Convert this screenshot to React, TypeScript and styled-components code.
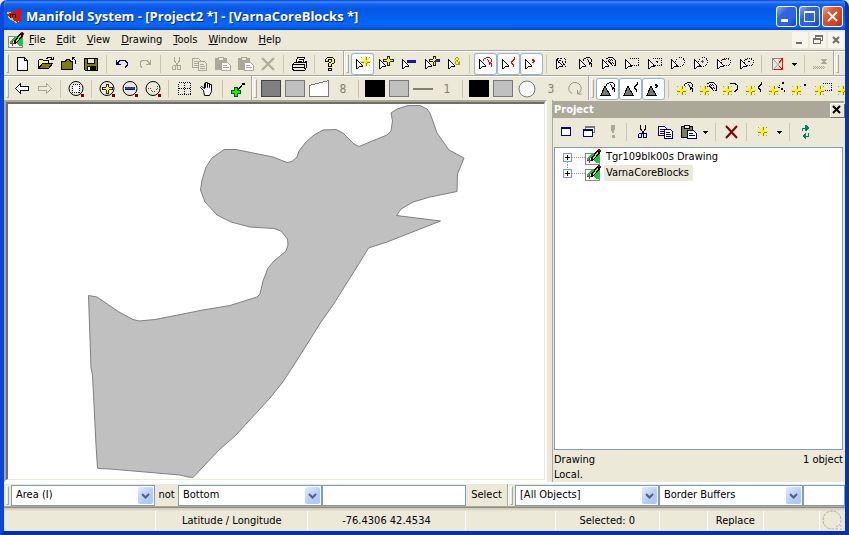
import React from "react";
import styled, { createGlobalStyle } from "styled-components";

const face = "#ece9d8";
const shade = "#aca899";
const edge = "#7f9db9";

const GlobalStyle = createGlobalStyle`
  * { box-sizing: border-box; }
  body {
    margin: 0;
    background: ${face};
    color: #000;
    font: 11px/14px "DejaVu Sans Condensed", "DejaVu Sans", sans-serif;
  }
  button, input, select { font: inherit; color: inherit; margin: 0; padding: 0; border: 0; background: none; }
  svg { display: block; flex: none; }
`;

const Window = styled.div`
  display: flex;
  flex-direction: column;
  height: 100vh;
  border: 4px solid #0a46d8;
  border-top: 0;
  border-radius: 7px 7px 0 0;
  border-right-color: #0335b8;
  border-bottom-color: #0130b4;
  background: ${face};
  overflow: hidden;
`;

const TitleBar = styled.header`
  display: flex;
  align-items: center;
  flex: none;
  height: 30px;
  margin: 0 -4px;
  padding: 2px 6px 0 4px;
  gap: 2px;
  color: #fff;
  background: linear-gradient(#0a3fc9 0, #3b8cff 2px, #1464ee 4px, #0556e6 9px, #0560f2 18px, #0468fd 25px, #0359e8 28px, #0240c4 30px);
`;

const Title = styled.h1`
  flex: 1;
  margin: 0 0 0 1px;
  font: bold 13px/18px "Open Sans", "Noto Sans", sans-serif;
  text-shadow: 1px 1px 0 #0a2a80;
  white-space: nowrap;
  overflow: hidden;
`;

const CaptionButton = styled.button<{ $close?: boolean }>`
  width: 21px;
  height: 21px;
  border: 1px solid #fff;
  border-radius: 3px;
  background: ${(p) =>
    p.$close
      ? "linear-gradient(135deg, #f0a38c, #e2532c 35%, #d5431d 70%, #b4330f)"
      : "linear-gradient(135deg, #86a8f4, #2e63e4 35%, #2a63ec 70%, #1243b8)"};
`;

const MenuBar = styled.nav`
  display: flex;
  align-items: center;
  flex: none;
  height: 20px;
  padding: 0 1px 0 4px;
`;

const MenuItem = styled.button`
  margin-left: 5px;
  padding-right: 6px;
  line-height: 18px;
  & u { text-underline-offset: 1px; }
`;

const Spacer = styled.span`
  flex: 1;
`;

const ChildButton = styled.button`
  width: 16px;
  height: 16px;
  margin-left: 2px;
  background: #f7f5ee;
`;

const ToolRow = styled.div`
  display: flex;
  flex: none;
  height: 25px;
  border-top: 1px solid ${shade};
  box-shadow: inset 0 1px 0 #fff;
  overflow: hidden;
`;

const Band = styled.div<{ $last?: boolean }>`
  display: flex;
  align-items: center;
  flex: none;
  padding: 1px 1px 0 2px;
  ${(p) => (p.$last ? "" : `border-right: 1px solid ${shade}; box-shadow: 1px 0 0 #fff;`)}
`;

const Grip = styled.span`
  flex: none;
  width: 3px;
  height: 19px;
  margin-right: 2px;
  border: 1px solid ${shade};
  border-left-color: #fff;
  border-top-color: #fff;
  background: ${face};
`;

const ToolButton = styled.button<{ $on?: boolean; $wide?: boolean }>`
  flex: none;
  width: ${(p) => (p.$wide ? 24 : 23)}px;
  height: 22px;
  border-radius: 3px;
  background: ${(p) => (p.$on ? "#fff" : "none")};
  box-shadow: ${(p) => (p.$on ? "inset 0 0 0 1px #98b5cf" : "none")};
`;

const Sep = styled.span`
  flex: none;
  width: 1px;
  height: 18px;
  margin: 0 4px 0 3px;
  background: #cac6b4;
`;

const ArrowButton = styled.button`
  width: 12px;
  height: 22px;
`;

const Measure = styled.button`
  width: 24px;
  height: 22px;
  color: #808073;
  font-size: 12px;
`;

const Workspace = styled.main`
  display: flex;
  flex: 1;
  min-height: 0;
`;

const MapFrame = styled.section`
  flex: 1;
  min-width: 0;
  border: 2px solid ${shade};
  border-right-color: #fff;
  border-bottom-color: #fff;
  margin-right: 5px;
  display: flex;
`;

const MapView = styled.div`
  flex: 1;
  min-width: 0;
  background: #fff;
  border: 2px solid #716f64;
  border-right: 1px solid ${face};
  border-bottom: 1px solid ${face};
  & svg { width: 100%; height: 100%; }
`;

const Panel = styled.aside`
  display: flex;
  flex-direction: column;
  flex: none;
  width: 293px;
  padding-right: 2px;
  border-left: 1px solid ${shade};
`;

const PanelHead = styled.header`
  display: flex;
  align-items: center;
  height: 17px;
  margin: 1px -1px 0 0;
  padding: 0 0 0 1px;
  background: ${shade};
`;

const PanelTitle = styled.h2`
  flex: 1;
  margin: 0;
  color: #fff;
  font-size: 11px;
  line-height: 16px;
`;

const PanelClose = styled.button`
  width: 14px;
  height: 14px;
  background: ${face};
  box-shadow: inset 1px 1px 0 #fff, 1px 1px 0 #716f64;
`;

const PanelTools = styled.div`
  display: flex;
  align-items: center;
  height: 28px;
  margin-left: 1px;
`;

const Tree = styled.ul`
  flex: 1;
  margin: 1px 0 0 1px;
  padding: 1px 0 0 4px;
  list-style: none;
  border: 1px solid ${edge};
  background: #fff;
`;

const TreeItem = styled.li`
  display: flex;
  align-items: center;
  height: 16px;
`;

const TreeLabel = styled.span<{ $selected?: boolean }>`
  margin-left: 3px;
  padding: 0 4px 0 2px;
  line-height: 16px;
  background: ${(p) => (p.$selected ? face : "transparent")};
`;

const PanelInfo = styled.div`
  display: flex;
  justify-content: space-between;
  height: 15px;
  padding-left: 1px;
  line-height: 15px;
`;

const PanelFoot = styled.footer`
  padding: 2px 0 0;
`;

const QueryRow = styled.div`
  display: flex;
  flex: none;
  height: 25px;
  border-top: 2px solid #fff;
  border-bottom: 1px solid ${shade};
`;

const QueryBand = styled.div<{ $grow?: boolean }>`
  display: flex;
  align-items: center;
  flex: ${(p) => (p.$grow ? "1 1 337px" : "0 1 504px")};
  min-width: 0;
  padding-left: 2px;
  ${(p) => (p.$grow ? "" : `border-right: 1px solid ${shade}; box-shadow: 1px 0 0 #fff;`)}
`;

const Combo = styled.span`
  display: flex;
  flex: 0 1 144px;
  height: 21px;
  min-width: 0;
  padding: 1px;
  border: 1px solid ${edge};
  background: #fff;
`;

const Select = styled.select`
  appearance: none;
  flex: 1;
  min-width: 0;
  padding-left: 3px;
  outline: 0;
`;

const Drop = styled.button`
  width: 15px;
  height: 17px;
  border-radius: 2px;
  background: linear-gradient(135deg, #e1eafe, #b7cbfb 60%, #aec4f5);
`;

const TextBox = styled.input<{ $grow?: boolean }>`
  flex: ${(p) => (p.$grow ? "1 1 42px" : "0 1 144px")};
  min-width: 0;
  height: 21px;
  padding: 0 3px;
  border: 1px solid ${edge};
  background: #fff;
`;

const NotLabel = styled.button`
  width: 23px;
  line-height: 18px;
`;

const SelectButton = styled.button`
  width: 41px;
  line-height: 18px;
`;

const StatusBar = styled.footer`
  display: flex;
  flex: none;
  height: 24px;
  border-top: 1px solid #8f8c80;
  box-shadow: inset 0 2px 2px #cfccbd;
`;

const Cell = styled.span<{ $w: number }>`
  flex: ${(p) => p.$w} 1 ${(p) => p.$w}px;
  min-width: 0;
  margin: 3px 0 1px;
  border-right: 1px solid #fff;
  line-height: 20px;
  text-align: center;
  white-space: nowrap;
`;

const Glyph = ({ children, w = 23 }: { children?: React.ReactNode; w?: number }) => (
  <svg width={w} height="22" viewBox={`0 0 ${w} 22`} fill="none" stroke="#000" shapeRendering="crispEdges">
    {children}
  </svg>
);

type ToolProps = { label: string; on?: boolean; wide?: boolean; children: React.ReactNode };
const Tool = ({ label, on, wide, children }: ToolProps) => (
  <ToolButton aria-label={label} title={label} $on={on} $wide={wide}>
    <Glyph w={wide ? 24 : 23}>{children}</Glyph>
  </ToolButton>
);

const Down = ({ label }: { label: string }) => (
  <ArrowButton aria-label={label}>
    <svg width="12" height="22" shapeRendering="crispEdges">
      <path d="M3 10h5v1h-1v1h-1v1h-1v-1h-1v-1h-1z" />
    </svg>
  </ArrowButton>
);

const Pointer = () => (
  <>
    <path d="M6 7h1v1h1v1h1v1h1v1h1v1h1v2h-3v1h-1v1h-2z" fill="#fff" stroke="none" />
    <path d="M5 6h1v10h-1zM6 7h1v1h-1zM7 8h1v1h-1zM8 9h1v1h-1zM9 10h1v1h-1zM10 11h1v1h-1zM11 12h1v1h-1zM8 13h4v1h-4zM7 14h1v1h-1zM6 15h1v1h-1z" fill="#000" stroke="none" />
  </>
);

const Star = ({ x, y }: { x: number; y: number }) => (
  <g transform={`translate(${x} ${y})`} stroke="none">
    <path d="M1-4h1v3h-1zM-4 1h3v1h-3zM2 1h3v1h-3zM1 2h1v3h-1z" fill="#8c8820" />
    <path d="M-4-4h1v1h-1zM4-4h1v1h-1zM-4 4h1v1h-1zM4 4h1v1h-1z" fill="#a8a440" />
    <path d="M0-5h1v11h-1zM-5 0h11v1h-11zM-1-1h3v3h-3z" fill="#fff000" />
    <path d="M-3-3h1v1h-1zM-2-2h1v1h-1zM3-3h1v1h-1zM2-2h1v1h-1zM-3 3h1v1h-1zM-2 2h1v1h-1zM2 2h1v1h-1zM3 3h1v1h-1z" fill="#fff000" />
  </g>
);

type ShapeProps = { kind: string; c?: string; dx?: number };
const Shape = ({ kind, c = "#000", dx = 0 }: ShapeProps) => {
  const shapes: Record<string, React.ReactNode> = {
    area: <path d="M9.5 7.500v-1l1-1h1l1-1h3l2 2v2l-1 1 1 2v2M12.500 6.500h1l1 1v1l1 1v2" />,
    hatch: (
      <>
        <path d="M8.500 6.500l1-1h1l1-1h4l2 2 1 1v4l-1 2" />
        <path d="M9 8.500h2l2 1 3 3M12 6l5 5M14 6l3 3M11 7l5 6" strokeDasharray="1 1" />
      </>
    ),
    line: <path d="M17.500 4v2l-1 1-2 2v1l1 1 1 1v2" />,
    point: <path d="M12 7h1v1h1v-1h-1v-1h-1zM14 8h-1v1h-1" />,
    box: <path d="M9.500 5.500h9v7h-9" strokeDasharray="1 1" strokeWidth="1" />,
    centerBox: (
      <>
        <path d="M9.500 5.500h9v7h-9" strokeDasharray="1 1" />
        <path d="M13 8.500h2M14.500 8v2" />
      </>
    ),
    circle: <circle cx="14" cy="9" r="4.500" strokeDasharray="1 1" />,
    centerCircle: (
      <>
        <circle cx="14" cy="9" r="4.500" strokeDasharray="1 1" />
        <path d="M12 8.500h3M13.500 7v3" stroke="#555" />
      </>
    ),
    ellipse: (
      <>
        <ellipse cx="14" cy="9" rx="5" ry="3.500" strokeDasharray="1 1" />
        <path d="M12 6.500h2M16 6.500h1" stroke="#f00" />
      </>
    ),
    centerEllipse: (
      <>
        <ellipse cx="14" cy="9" rx="5" ry="3.500" strokeDasharray="1 1" />
        <path d="M13 8.500h2" />
      </>
    ),
    arc: <path d="M8.500 6.500l1-1h4l2 1 1 1v3l-1 2-2 1" />,
    points: <path d="M15 4h2v2h-2zM12 7h1v1h-1zM11 9h2v1h-2zM14 10h2v2h-2zM17 12h1v2h-1z" fill={c} stroke="none" />,
    dot: <path d="M14 6h2v2h-2z" fill={c} stroke="none" />,
    touch: <path d="M5.500 9v-2l1-1 1-1h2l2 1M7.500 10v-2l1-1h1M13.500 5.500l1 1v3l-1 1M11.500 8v2l2 2 1 1 1 2" strokeDasharray="2 1" />,
  };
  return <g stroke={c} transform={`translate(${dx} 0)`}>{shapes[kind]}</g>;
};

const Plus = ({ x = 14, y = 8 }: { x?: number; y?: number }) => (
  <g transform={`translate(${x} ${y})`} stroke="none">
    <path d="M-1-5h3v3h4v3h-4v4h-3v-4h-4v-3h4z" fill="#222" />
    <path d="M0-4h1v8h-1zM-4-1h9v1h-9zM-1-2h3v3h-3z" fill="#ff0" />
  </g>
);

const Clip = ({ c = "#000", body = "#807c50" }: { c?: string; body?: string }) => (
  <>
    <path d="M4.500 5.500h11v11h-11z" fill={body} stroke={c} />
    <path d="M7.500 4.500h5v3h-5z" fill={face} stroke={c} />
    <path d="M10.500 9.500h6l3 3v5h-9zM12 12.500h4M12 14.500h6" fill="#fff" stroke={c === "#000" ? "#000080" : c} />
  </>
);

const Copy = ({ c, fill }: { c: string; fill: string }) => (
  <>
    <path d="M4.500 5.500h6l2 2v7h-8zM6 8.500h4M6 10.500h5M6 12.500h5" stroke={c} fill={fill} />
    <path d="M10.500 8.500h6l2 2v7h-8zM12 11.500h4M12 13.500h5M12 15.500h5" stroke={c} fill={fill} />
  </>
);

const Scissors = ({ c, handle = c }: { c: string; handle?: string }) => (
  <>
    <path d="M9.500 4v4l4 5M14.500 4v4l-4 5" stroke={c} />
    <path d="M8.500 12.500h2v4h-3v-3zM13.500 12.500h2v4h-3v-3z" stroke={handle} />
  </>
);

const Lens = () => (
  <>
    <circle cx="11" cy="10.500" r="7" shapeRendering="auto" />
    <path d="M16 16h3v3h-3z" fill="#800000" stroke="none" />
  </>
);

const DrawingIcon = () => (
  <svg width="16" height="16" viewBox="0 0 16 16" shapeRendering="crispEdges">
    <path d="M0 4h15v12h-15z" fill="#888" />
    <path d="M1 5h13v10h-13z" fill="#fff" />
    <path d="M2 9l4-4h3l-2 3-5 4zM9 11l5-6v9h-3l-2-2z" fill="#00d43c" />
    <path d="M4 9h1v5h-1zM2 11h5v1h-5z" fill="#e02020" />
    <path d="M6 12v-3l6-8h3v3l-6 7z" fill="#000" />
    <path d="M8 9l4-6h1v1l-4 6h-1z" fill="#e8d800" />
    <path d="M13 0h2v1h1v2h-1v-1h-2z" fill="#a80000" />
  </svg>
);

const Chevron = () => (
  <svg width="15" height="17" fill="none" stroke="#4d6185" strokeWidth="2">
    <path d="M4 7l3.500 3.500L11 7" />
  </svg>
);

const Picker = ({ label, value }: { label: string; value: string }) => (
  <Combo>
    <Select aria-label={label} defaultValue={value}>
      <option>{value}</option>
    </Select>
    <Drop aria-label={`Open ${label}`} tabIndex={-1}>
      <Chevron />
    </Drop>
  </Combo>
);

const outline =
  "391,113 397,109 408,105.5 420,105.5 427,109 430,113 437,133 449,150 464,158 457.5,174 457,191.5 430,197 413,202 401,209 396.5,215.5 440.5,221 387,242 368.5,248 360,262 333,305 321,322 294,365 282,383 270,398 236,435 219,450 193,477.5 188,477 180,475 110,469 99,468.5 97.5,468 96,445 92.5,375 91,368 88.5,295.5 97,297 119,312 133,319.5 139,321 155,319.5 203,310 230,305.5 257,297 260,294 263,281 268,268 274,261 286,251 288,245 287.5,239 281,231 274,228.5 250,227 231,222 217,215 205,202 200.5,190 202,180 206,167 212,158 224,149.5 236,149.5 273,157 287,162.5 292,161.5 297,157 299,151 306,142 314,135 323,130 336,129.5 343,133 354,144 359,146.5 387,135 391,131 392.5,121";

const menus = ["File", "Edit", "View", "Drawing", "Tools", "Window", "Help"];
const selectKinds = ["touch", "area", "hatch", "box", "centerBox", "circle", "centerCircle", "ellipse", "centerEllipse"];
const createKinds = ["area", "hatch", "arc", "line", "points", "dot", "box", "box"];
const grey = "#aca899";

const Items = [
  { name: "Tgr109blk00s Drawing", selected: false },
  { name: "VarnaCoreBlocks", selected: true },
];

const TopTools = () => (
  <ToolRow>
    <Band>
      <Grip />
      <Tool label="New"><path d="M6.500 4.500h7l3 3v10h-10zM13.500 4.500v3h3" fill="#fff" /></Tool>
      <Tool label="Open">
        <path d="M4.500 15.500v-8l1-1h3l1 1h5v3" fill="#ffff80" /><path d="M4.500 15.500l4-5h10l-4 5z" fill="#808000" />
        <path d="M12 5.500h1l1-1h3l1 2M16 6.500h3v-3" />
      </Tool>
      <Tool label="Close project">
        <path d="M4.500 8.500h4l1-2h3l1 2h2v8h-11z" fill="#808000" /><path d="M15.500 4v3M15 4.500h3M16.500 5.500l2 2v3" />
      </Tool>
      <Tool label="Save">
        <path d="M4.500 5.500h13v12h-12l-1-1z" fill="#808000" /><path d="M7.500 5.500h7v5h-7z" fill={face} />
        <path d="M7 13h9v4h-9z" fill="#000" stroke="none" /><path d="M8 14h2v3h-2z" fill="#fff" stroke="none" />
      </Tool>
      <Sep />
      <Tool label="Undo"><g stroke="#000080"><path d="M5.500 7v5M5 11.500h5M6 10.500l3-3h5l2 2v3l-2 2" /><path d="M6 9h2v2h-2z" fill="#000080" stroke="none" /></g></Tool>
      <Tool label="Redo"><g stroke={grey}><path d="M16.500 7v5M12 11.500h5M16 10.500l-3-3h-5l-2 2v3l2 2" /><path d="M14 9h2v2h-2z" fill={grey} stroke="none" /></g></Tool>
      <Sep />
      <Tool label="Cut"><Scissors c={grey} /></Tool>
      <Tool label="Copy"><Copy c={grey} fill={face} /></Tool>
      <Tool label="Paste"><Clip c={grey} body={grey} /></Tool>
      <Tool label="Paste as"><Clip c={grey} body={grey} /></Tool>
      <Tool label="Delete"><path d="M5 5l12 12M17 5l-12 12" stroke={grey} strokeWidth="2" shapeRendering="auto" /></Tool>
      <Sep />
      <Tool label="Print">
        <path d="M7.500 10.500l2-6h7l-2 6z" fill="#fff" /><path d="M11 6.500h4M10 8.500h4" />
        <path d="M4.500 11.500l2-2h10l2-1v6l-2 3h-11l-1-2z" fill={face} /><path d="M5 11.500h12M5 14.500h12M16.500 11v5" />
      </Tool>
      <Sep />
      <Tool label="Help">
        <path d="M6.500 8.500v-2l2-2h5l2 2v3l-3 2v2h-3v-3l3-2v-2h-3v2z" fill="#ff0" /><path d="M9.500 15.500h3v2h-3z" fill="#ff0" />
      </Tool>
    </Band>
    <Band>
      <Grip />
      <Tool label="Replace selection" on><Pointer /><Star x={14} y={8} /></Tool>
      <Tool label="Add to selection"><Pointer /><Plus /></Tool>
      <Tool label="Subtract from selection"><Pointer /><path d="M10 7h9v3h-9z" fill="#222" stroke="none" /><path d="M10 7h1v1h-1zM11 8h8v1h-8zM12 7h2v1h-2zM15 7h2v1h-2z" fill="#11f" stroke="none" /></Tool>
      <Tool label="Invert selection"><Pointer /><Plus /><path d="M15 7h4v1h-4zM14 8h5v1h-5z" fill="#22f" stroke="none" /><path d="M14 5h1v1h-1z" fill="#fff" stroke="none" /></Tool>
      <Tool label="Intersect selection"><Pointer /><g stroke="#a8a000"><path d="M13 4.500h2M12.500 5v2M15.500 5v2M13 7.500h1l3 4M12.500 8v3M13 11.500h2l2-3" /></g><path d="M13 5h2v2h-2zM13 8h1v3h-1z" fill="#ff0" stroke="none" /></Tool>
      <Sep />
      <Tool label="Select areas" on><Pointer /><Shape kind="area" c="#f00" /></Tool>
      <Tool label="Select lines" on><Pointer /><Shape kind="line" c="#f00" /></Tool>
      <Tool label="Select points" on><Pointer /><Shape kind="point" c="#f00" /></Tool>
      <Sep />
      {selectKinds.map((k) => (
        <Tool key={k} label={`Select ${k}`}><Pointer /><Shape kind={k} /></Tool>
      ))}
      <Sep />
      <Tool label="Snap"><path d="M6.500 5.500h10v11h-10z" stroke="#888" /><path d="M7 6l10 11M17 6l-10 11" stroke="#999" shapeRendering="auto" /><path d="M15 5.500h1.500v11h-9M13 10l3-4M13 13l3 3" stroke="#f00" /></Tool>
      <Down label="Snap options" />
      <Sep />
      <Tool label="Clear"><path d="M4 13.500h11M5 14.500h12M4 15.500h12" stroke={grey} strokeDasharray="1 1" /><path d="M13 6l4 5M17 6l-4 5" stroke={grey} strokeWidth="2" /></Tool>
    </Band>
    <Band $last><Grip /></Band>
  </ToolRow>
);

const LowerTools = () => (
  <ToolRow>
    <Band>
      <Grip />
      <Tool label="Back"><path d="M4.500 10.500l5-5v3h8v4h-8v3z" fill="#fff" /></Tool>
      <Tool label="Forward"><path d="M17.500 10.500l-5-5v3h-8v4h8v3z" stroke={grey} /></Tool>
      <Sep />
      <Tool label="Zoom box"><Lens /><path d="M7.500 6.500h7v8h-7z" strokeDasharray="1 1" fill="#fff" /></Tool>
      <Sep />
      <Tool label="Zoom in"><Lens /><Plus x={11} y={11} /></Tool>
      <Tool label="Zoom out"><Lens /><path d="M6 9h10v3h-10z" fill="#222" stroke="none" /><path d="M7 9h2v1h-2zM10 9h2v1h-2zM13 9h2v1h-2zM6 10h10v1h-10z" fill="#24f" stroke="none" /></Tool>
      <Tool label="Zoom to fit"><Lens /><path d="M6 10.500h2l2 3h2l3-2v-4" strokeDasharray="1 1" stroke="#555" /></Tool>
      <Sep />
      <Tool label="Center"><path d="M5.500 4.500h12v12h-12zM11.500 5v12M6 10.500h12" strokeDasharray="1 1" /></Tool>
      <Tool label="Grab"><path d="M7.500 12.500l-3-3 1-1 3 2v-5h1v4-5h2v5-4h2v4-3h2v7l-2 4h-5z" fill="#fff" shapeRendering="auto" /></Tool>
      <Sep />
      <Tool label="Tracker"><path d="M11 11.500l4-4" /><path d="M15 5h3v2h-3z" fill="#000" stroke="none" /><path d="M7 9h4v3h3v4h-3v3h-4v-3h-3v-4h3z" fill="#050" stroke="none" /><path d="M8 10h2v3h3v2h-3v3h-2v-3h-3v-2h3z" fill="#0f0" stroke="none" /></Tool>
    </Band>
    <Band>
      <Grip />
      <Tool label="Area foreground" wide><path d="M2.500 2.500h19v16h-19z" fill="#808080" stroke="#444" /></Tool>
      <Tool label="Area background" wide><path d="M2.500 2.500h19v16h-19z" fill="#c0c0c0" stroke="#777" /></Tool>
      <Tool label="Area style" wide><path d="M2.500 7.500l19-5v16h-19z" fill="#fff" stroke="#777" /></Tool>
      <Measure>8</Measure>
      <Sep />
      <Tool label="Line foreground" wide><path d="M2.500 2.500h19v16h-19z" fill="#000" /></Tool>
      <Tool label="Line background" wide><path d="M2.500 2.500h19v16h-19z" fill="#c0c0c0" stroke="#777" /></Tool>
      <Tool label="Line style" wide><path d="M2 11h20" stroke="#808073" strokeWidth="2" /></Tool>
      <Measure>1</Measure>
      <Sep />
      <Tool label="Point foreground" wide><path d="M2.500 2.500h19v16h-19z" fill="#000" /></Tool>
      <Tool label="Point background" wide><path d="M2.500 2.500h19v16h-19z" fill="#c0c0c0" stroke="#777" /></Tool>
      <Tool label="Point style" wide><circle cx="12" cy="11" r="8" fill="#fff" stroke="#777" shapeRendering="auto" /></Tool>
      <Measure>3</Measure>
      <Tool label="Rotation" wide><path d="M9 15.500c-6-3-3-11 3-11s9 8 3 11M14.500 12v4h4" stroke="#999584" shapeRendering="auto" /></Tool>
    </Band>
    <Band $last>
      <Grip />
      {["area", "line", "point"].map((k) => (
        <Tool key={k} label={`Edit ${k}`} on><path d="M9 8l5 9h-9z" fill="#777" /><Shape kind={k} dx={1} /></Tool>
      ))}
      <Sep />
      {createKinds.map((k, i) => (
        <Tool key={i} label={`Insert ${k}`}><Shape kind={k} dx={2} /><Star x={8} y={12} /></Tool>
      ))}
    </Band>
  </ToolRow>
);

const ProjectPanel = () => (
  <Panel>
    <PanelHead>
      <PanelTitle>Project</PanelTitle>
      <PanelClose aria-label="Close project pane">
        <svg width="14" height="14" stroke="#000" strokeWidth="2"><path d="M3 3l7 7M10 3l-7 7" /></svg>
      </PanelClose>
    </PanelHead>
    <PanelTools>
      <Tool label="View"><path d="M7.500 6.500h9v8h-9z" fill="#fff" stroke="#000080" /><path d="M7 7h10" stroke="#000080" strokeWidth="2" /></Tool>
      <Tool label="Cascade"><path d="M8.500 5.500h9v6h-9z" fill="#fff" stroke="#777" /><path d="M8 6h10" stroke="#777" strokeWidth="2" /><path d="M6.500 8.500h9v7h-9z" fill="#fff" stroke="#000080" /><path d="M6 9h10" stroke="#000080" strokeWidth="2" /></Tool>
      <Tool label="Run"><path d="M11 4h4v3l-1 5h-2l-1-5zM11.500 14h3v3h-3z" fill={grey} stroke="none" /></Tool>
      <Sep />
      <Tool label="Cut"><Scissors c="#000" handle="#000080" /></Tool>
      <Tool label="Copy"><Copy c="#000080" fill="#fff" /></Tool>
      <Tool label="Paste"><Clip /></Tool>
      <Down label="Paste options" />
      <Sep />
      <Tool label="Delete"><path d="M6 5l11 12M17 5l-11 12" stroke="#800000" strokeWidth="2" shapeRendering="auto" /></Tool>
      <Sep />
      <Tool label="Create"><Star x={11} y={10} /></Tool>
      <Down label="Create options" />
      <Sep />
      <Tool label="Refresh"><path d="M8.500 10v-3h5M14.500 12v3h-5" stroke="#008060" strokeWidth="1" /><path d="M11 4h1l3 3-3 3h-1zM12 12h-1l-3 3 3 3h1z" fill="#008060" stroke="none" /></Tool>
    </PanelTools>
    <Tree>
      {Items.map((item, i) => (
        <TreeItem key={item.name}>
          <svg width="26" height="16" fill="none" shapeRendering="crispEdges">
            <path d={i ? "M8.500 0v4M13 8.500h13" : "M8.500 13v3M13 8.500h13"} stroke="#999" strokeDasharray="1 1" />
            <path d="M4.500 4.500h8v8h-8z" fill="#f7f5ee" stroke={edge} />
            <path d="M6 8.500h5M8.500 6v5" stroke="#000" />
          </svg>
          <DrawingIcon />
          <TreeLabel $selected={item.selected}>{item.name}</TreeLabel>
        </TreeItem>
      ))}
    </Tree>
    <PanelFoot>
      <PanelInfo><span>Drawing</span><span>1 object</span></PanelInfo>
      <PanelInfo><span>Local.</span></PanelInfo>
    </PanelFoot>
  </Panel>
);

export default function App() {
  return (
    <>
      <GlobalStyle />
      <Window>
        <TitleBar>
          <svg width="19" height="18" shapeRendering="crispEdges">
            <path d="M3 5h10l3 9-4 2-8-5z" fill="#e8d000" />
            <path d="M2 8L17 1v14z" fill="#e01010" />
            <path d="M6 11v-4h5v4M8.500 7v3" stroke="#300" fill="none" />
            <path d="M8 12l6 4v-5z" fill="#e01010" />
          </svg>
          <Title>Manifold System - [Project2 *] - [VarnaCoreBlocks *]</Title>
          <CaptionButton aria-label="Minimize"><svg width="19" height="19"><path d="M4 12h7v3h-7z" fill="#fff" /></svg></CaptionButton>
          <CaptionButton aria-label="Maximize"><svg width="19" height="19" fill="none" stroke="#fff" shapeRendering="crispEdges"><path d="M4.500 4.500h10v10h-10z" /><path d="M4 5h11" strokeWidth="2" /></svg></CaptionButton>
          <CaptionButton $close aria-label="Close"><svg width="19" height="19" stroke="#fff" strokeWidth="2"><path d="M5 5l9 9M14 5l-9 9" /></svg></CaptionButton>
        </TitleBar>
        <MenuBar>
          <DrawingIcon />
          {menus.map((m) => (
            <MenuItem key={m}><u>{m[0]}</u>{m.slice(1)}</MenuItem>
          ))}
          <Spacer />
          <ChildButton aria-label="Minimize drawing"><svg width="16" height="16"><path d="M4 10h6v2h-6z" fill="#716f64" /></svg></ChildButton>
          <ChildButton aria-label="Restore drawing"><svg width="16" height="16" fill="none" stroke="#716f64" shapeRendering="crispEdges"><path d="M5.500 6v-2.500h7v5h-2M3.500 6.500h7v5h-7zM5 4h8M3 7h8" /></svg></ChildButton>
          <ChildButton aria-label="Close drawing"><svg width="16" height="16" stroke="#716f64" strokeWidth="2"><path d="M5 5l6 6M11 5l-6 6" /></svg></ChildButton>
        </MenuBar>
        <TopTools />
        <LowerTools />
        <Workspace>
          <MapFrame>
            <MapView>
              <svg viewBox="8 104 536 374" preserveAspectRatio="xMinYMin meet" role="img" aria-label="VarnaCoreBlocks drawing">
                <polygon points={outline} fill="#c0c0c0" stroke="#808080" />
              </svg>
            </MapView>
          </MapFrame>
          <ProjectPanel />
        </Workspace>
        <QueryRow>
          <QueryBand>
            <Grip />
            <Picker label="Field" value="Area (I)" />
            <NotLabel>not</NotLabel>
            <Picker label="Operator" value="Bottom" />
            <TextBox aria-label="Value" />
            <SelectButton>Select</SelectButton>
          </QueryBand>
          <QueryBand $grow>
            <Grip />
            <Picker label="Objects" value="[All Objects]" />
            <Picker label="Transform" value="Border Buffers" />
            <TextBox aria-label="Transform value" $grow />
          </QueryBand>
        </QueryRow>
        <StatusBar>
          <Cell $w={152} />
          <Cell $w={152}>Latitude / Longitude</Cell>
          <Cell $w={157}>-76.4306 42.4534</Cell>
          <Cell $w={90} />
          <Cell $w={104}>Selected: 0</Cell>
          <Cell $w={48} />
          <Cell $w={56}>Replace</Cell>
          <Cell $w={56} />
          <svg width="25" height="24" fill="none" stroke={shade}>
            <circle cx="12" cy="12" r="9" strokeDasharray="3 1" />
            <path d="M20 13h2v2h-2zM16 17h2v2h-2zM20 17h2v2h-2zM12 20h2v2h-2zM16 20h2v2h-2zM20 20h2v2h-2z" fill={shade} stroke="#fff" strokeWidth="0.500" />
          </svg>
        </StatusBar>
      </Window>
    </>
  );
}
